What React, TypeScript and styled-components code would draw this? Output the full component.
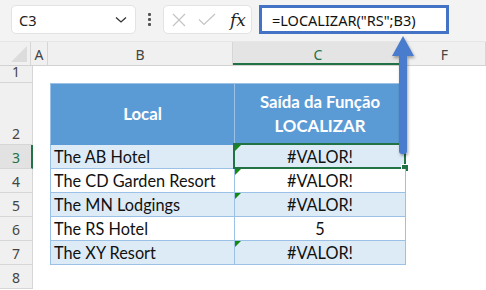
import React from "react";
import styled, { createGlobalStyle } from "styled-components";

const Global = createGlobalStyle`
  html, body { margin: 0; padding: 0; background: #ffffff; }
  body { width: 486px; height: 290px; overflow: hidden; }
`;

const Page = styled.div`
  position: relative;
  width: 486px;
  height: 290px;
  overflow: hidden;
  background: #ffffff;
`;

const Toolbar = styled.div`
  height: 42px;
  box-sizing: border-box;
  display: flex;
  align-items: center;
  padding: 0 0 2px 11px;
  background: #f3f3f3;
  border-bottom: 1px solid #e6e6e6;
  font-family: "Noto Sans", "Open Sans", sans-serif;
`;

const NameBox = styled.div`
  width: 125px;
  height: 29px;
  box-sizing: border-box;
  background: #fff;
  border: 1px solid #e3e3e3;
  border-radius: 5px;
  display: flex;
  align-items: center;
  justify-content: space-between;
  padding: 0 8px 0 7px;
  font-size: 14.5px;
  color: #222;
`;

const Dots = styled.div`
  width: 27px;
  display: flex;
  flex-direction: column;
  align-items: center;
  gap: 2px;
  span {
    width: 3px;
    height: 3px;
    background: #555;
    border-radius: 1px;
  }
`;

const FxBox = styled.div`
  width: 89px;
  height: 29px;
  box-sizing: border-box;
  background: #fff;
  border: 1px solid #e3e3e3;
  border-radius: 5px;
  display: flex;
  align-items: center;
  padding-left: 8px;
  gap: 12px;
`;

const Fx = styled.span`
  font-family: "DejaVu Serif", "Liberation Serif", serif;
  font-style: italic;
  font-size: 17px;
  color: #222;
  margin-left: 2px;
`;

const FormulaInput = styled.div`
  margin-left: 7px;
  width: 190px;
  height: 29px;
  box-sizing: border-box;
  background: #fff;
  border: 3px solid #4472c4;
  display: flex;
  align-items: center;
  padding-left: 10px;
  font-size: 14.5px;
  color: #111;
  white-space: nowrap;
`;

const HeaderRow = styled.div`
  display: flex;
  height: 24px;
  box-sizing: border-box;
  background: #f0f0f0;
  border-bottom: 1px solid #d2d2d2;
  font-family: "Noto Sans", "Open Sans", sans-serif;
`;

const Corner = styled.div`
  position: relative;
  width: 33px;
  box-sizing: border-box;
  border-right: 1px solid #d6d6d6;
  &::after {
    content: "";
    position: absolute;
    right: 3px;
    bottom: 3px;
    width: 0;
    height: 0;
    border-left: 16px solid transparent;
    border-bottom: 16px solid #dcdcdc;
  }
`;

const ColHead = styled.div<{ $w: number; $sel?: boolean }>`
  width: ${(p) => p.$w}px;
  flex: none;
  box-sizing: border-box;
  display: flex;
  align-items: center;
  justify-content: center;
  font-size: 14px;
  color: ${(p) => (p.$sel ? "#217346" : "#444")};
  border-right: 1px solid #d6d6d6;
  ${(p) => (p.$sel ? "box-shadow: inset 0 -2px 0 #217346; background: #e4e4e4;" : "")}
  padding-top: 1px;
`;

const Row = styled.div<{ $h: number }>`
  display: flex;
  height: ${(p) => p.$h}px;
`;

const RowHead = styled.div<{ $sel?: boolean }>`
  width: 33px;
  flex: none;
  box-sizing: border-box;
  background: ${(p) => (p.$sel ? "#e2e2e2" : "#f0f0f0")};
  border-bottom: 1px solid #d6d6d6;
  border-right: ${(p) => (p.$sel ? "2px solid #217346" : "1px solid #d6d6d6")};
  display: flex;
  align-items: flex-end;
  justify-content: center;
  padding-bottom: 1px;
  padding-left: ${(p) => (p.$sel ? "1px" : "0")};
  font-family: "Noto Sans", "Open Sans", sans-serif;
  font-size: 14px;
  color: ${(p) => (p.$sel ? "#217346" : "#444")};
`;

const Spacer = styled.div<{ $w: number }>`
  width: ${(p) => p.$w}px;
  flex: none;
`;

const Cell = styled.div<{ $w: number; $kind: "head" | "odd" | "even"; $first?: boolean; $center?: boolean; $top?: boolean }>`
  position: relative;
  width: ${(p) => p.$w}px;
  flex: none;
  box-sizing: border-box;
  background: ${(p) => (p.$kind === "head" ? "#5b9bd5" : p.$kind === "odd" ? "#ddebf7" : "#ffffff")};
  border-right: 1px solid #9bc2e6;
  border-bottom: 1px solid ${(p) => (p.$kind === "head" ? "#5b9bd5" : "#9bc2e6")};
  ${(p) => (p.$first ? "border-left: 1px solid #9bc2e6;" : "")}
  ${(p) => (p.$top ? "border-top: 1px solid #9bc2e6;" : "")}
  display: flex;
  flex-direction: column;
  align-items: ${(p) => (p.$center ? "center" : "flex-start")};
  justify-content: ${(p) => (p.$kind === "head" ? "center" : "flex-end")};
  padding: ${(p) => (p.$kind === "head" ? "0" : "0 3px 0px 3px")};
  font-family: Lato, "Noto Sans", sans-serif;
  font-size: ${(p) => (p.$kind === "head" ? "16.8px" : "16.3px")};
  line-height: 22px;
  color: ${(p) => (p.$kind === "head" ? "#ffffff" : "#111")};
  font-weight: ${(p) => (p.$kind === "head" ? 700 : 400)};
  white-space: nowrap;
`;

const HeadLine = styled.span`
  line-height: 24px;
  text-align: center;
`;

const ErrorMark = styled.span`
  position: absolute;
  left: 0;
  top: 0;
  width: 0;
  height: 0;
  border-top: 6px solid #148a14;
  border-right: 6px solid transparent;
`;

const Selection = styled.span`
  position: absolute;
  left: -2px;
  top: -2px;
  right: -1px;
  bottom: -1px;
  border: 2px solid #217346;
  pointer-events: none;
  &::after {
    content: "";
    position: absolute;
    right: -5px;
    bottom: -5px;
    width: 6px;
    height: 6px;
    background: #217346;
    border: 1px solid #fff;
  }
`;

const ArrowLayer = styled.svg`
  position: absolute;
  left: 388px;
  top: 32px;
  overflow: visible;
`;

const rows = [
  { n: 3, name: "The AB Hotel", val: "#VALOR!", err: true },
  { n: 4, name: "The CD Garden Resort", val: "#VALOR!", err: true },
  { n: 5, name: "The MN Lodgings", val: "#VALOR!", err: true },
  { n: 6, name: "The RS Hotel", val: "5", err: false },
  { n: 7, name: "The XY Resort", val: "#VALOR!", err: true },
];

export default function App() {
  return (
    <Page>
      <Global />
      <Toolbar>
        <NameBox>
          <span>C3</span>
          <svg width="12" height="8" viewBox="0 0 12 8">
            <path d="M1 1.5 L6 6 L11 1.5" fill="none" stroke="#333" strokeWidth="1.3" />
          </svg>
        </NameBox>
        <Dots>
          <span />
          <span />
          <span />
        </Dots>
        <FxBox>
          <svg width="14" height="14" viewBox="0 0 14 14">
            <path d="M1 1 L13 13 M13 1 L1 13" stroke="#c4c4c4" strokeWidth="1.2" fill="none" />
          </svg>
          <svg width="18" height="13" viewBox="0 0 18 13">
            <path d="M1 6.5 L6 11.5 L17 1" stroke="#c4c4c4" strokeWidth="1.2" fill="none" />
          </svg>
          <Fx>fx</Fx>
        </FxBox>
        <FormulaInput>=LOCALIZAR("RS";B3)</FormulaInput>
      </Toolbar>
      <HeaderRow>
        <Corner />
        <ColHead $w={17}>A</ColHead>
        <ColHead $w={185}>B</ColHead>
        <ColHead $w={171} $sel>C</ColHead>
        <ColHead $w={82}>F</ColHead>
      </HeaderRow>
      <Row $h={17}>
        <RowHead>1</RowHead>
      </Row>
      <Row $h={62}>
        <RowHead>2</RowHead>
        <Spacer $w={17} />
        <Cell $w={185} $kind="head" $first $top $center>
          <HeadLine>Local</HeadLine>
        </Cell>
        <Cell $w={171} $kind="head" $top $center>
          <HeadLine>Saída da Função</HeadLine>
          <HeadLine>LOCALIZAR</HeadLine>
        </Cell>
      </Row>
      {rows.map((r, i) => (
        <Row $h={24} key={r.n}>
          <RowHead $sel={r.n === 3}>{r.n}</RowHead>
          <Spacer $w={17} />
          <Cell $w={185} $kind={i % 2 === 0 ? "odd" : "even"} $first>
            {r.name}
          </Cell>
          <Cell $w={171} $kind={i % 2 === 0 ? "odd" : "even"} $center>
            {r.err && <ErrorMark />}
            {r.val}
            {r.n === 3 && <Selection />}
          </Cell>
        </Row>
      ))}
      <Row $h={24}>
        <RowHead>8</RowHead>
      </Row>
      <ArrowLayer width="30" height="125" viewBox="0 0 30 125">
        <defs>
          <filter id="sh" x="-50%" y="-20%" width="200%" height="140%">
            <feDropShadow dx="1" dy="2" stdDeviation="1.6" floodColor="#000" floodOpacity="0.35" />
          </filter>
        </defs>
        <path
          d="M15 4 L26 24 L19 24 L19 119 Q19 122 16 122 L14 122 Q11 122 11 119 L11 24 L4 24 Z"
          fill="#4a7bcc"
          filter="url(#sh)"
        />
      </ArrowLayer>
    </Page>
  );
}
